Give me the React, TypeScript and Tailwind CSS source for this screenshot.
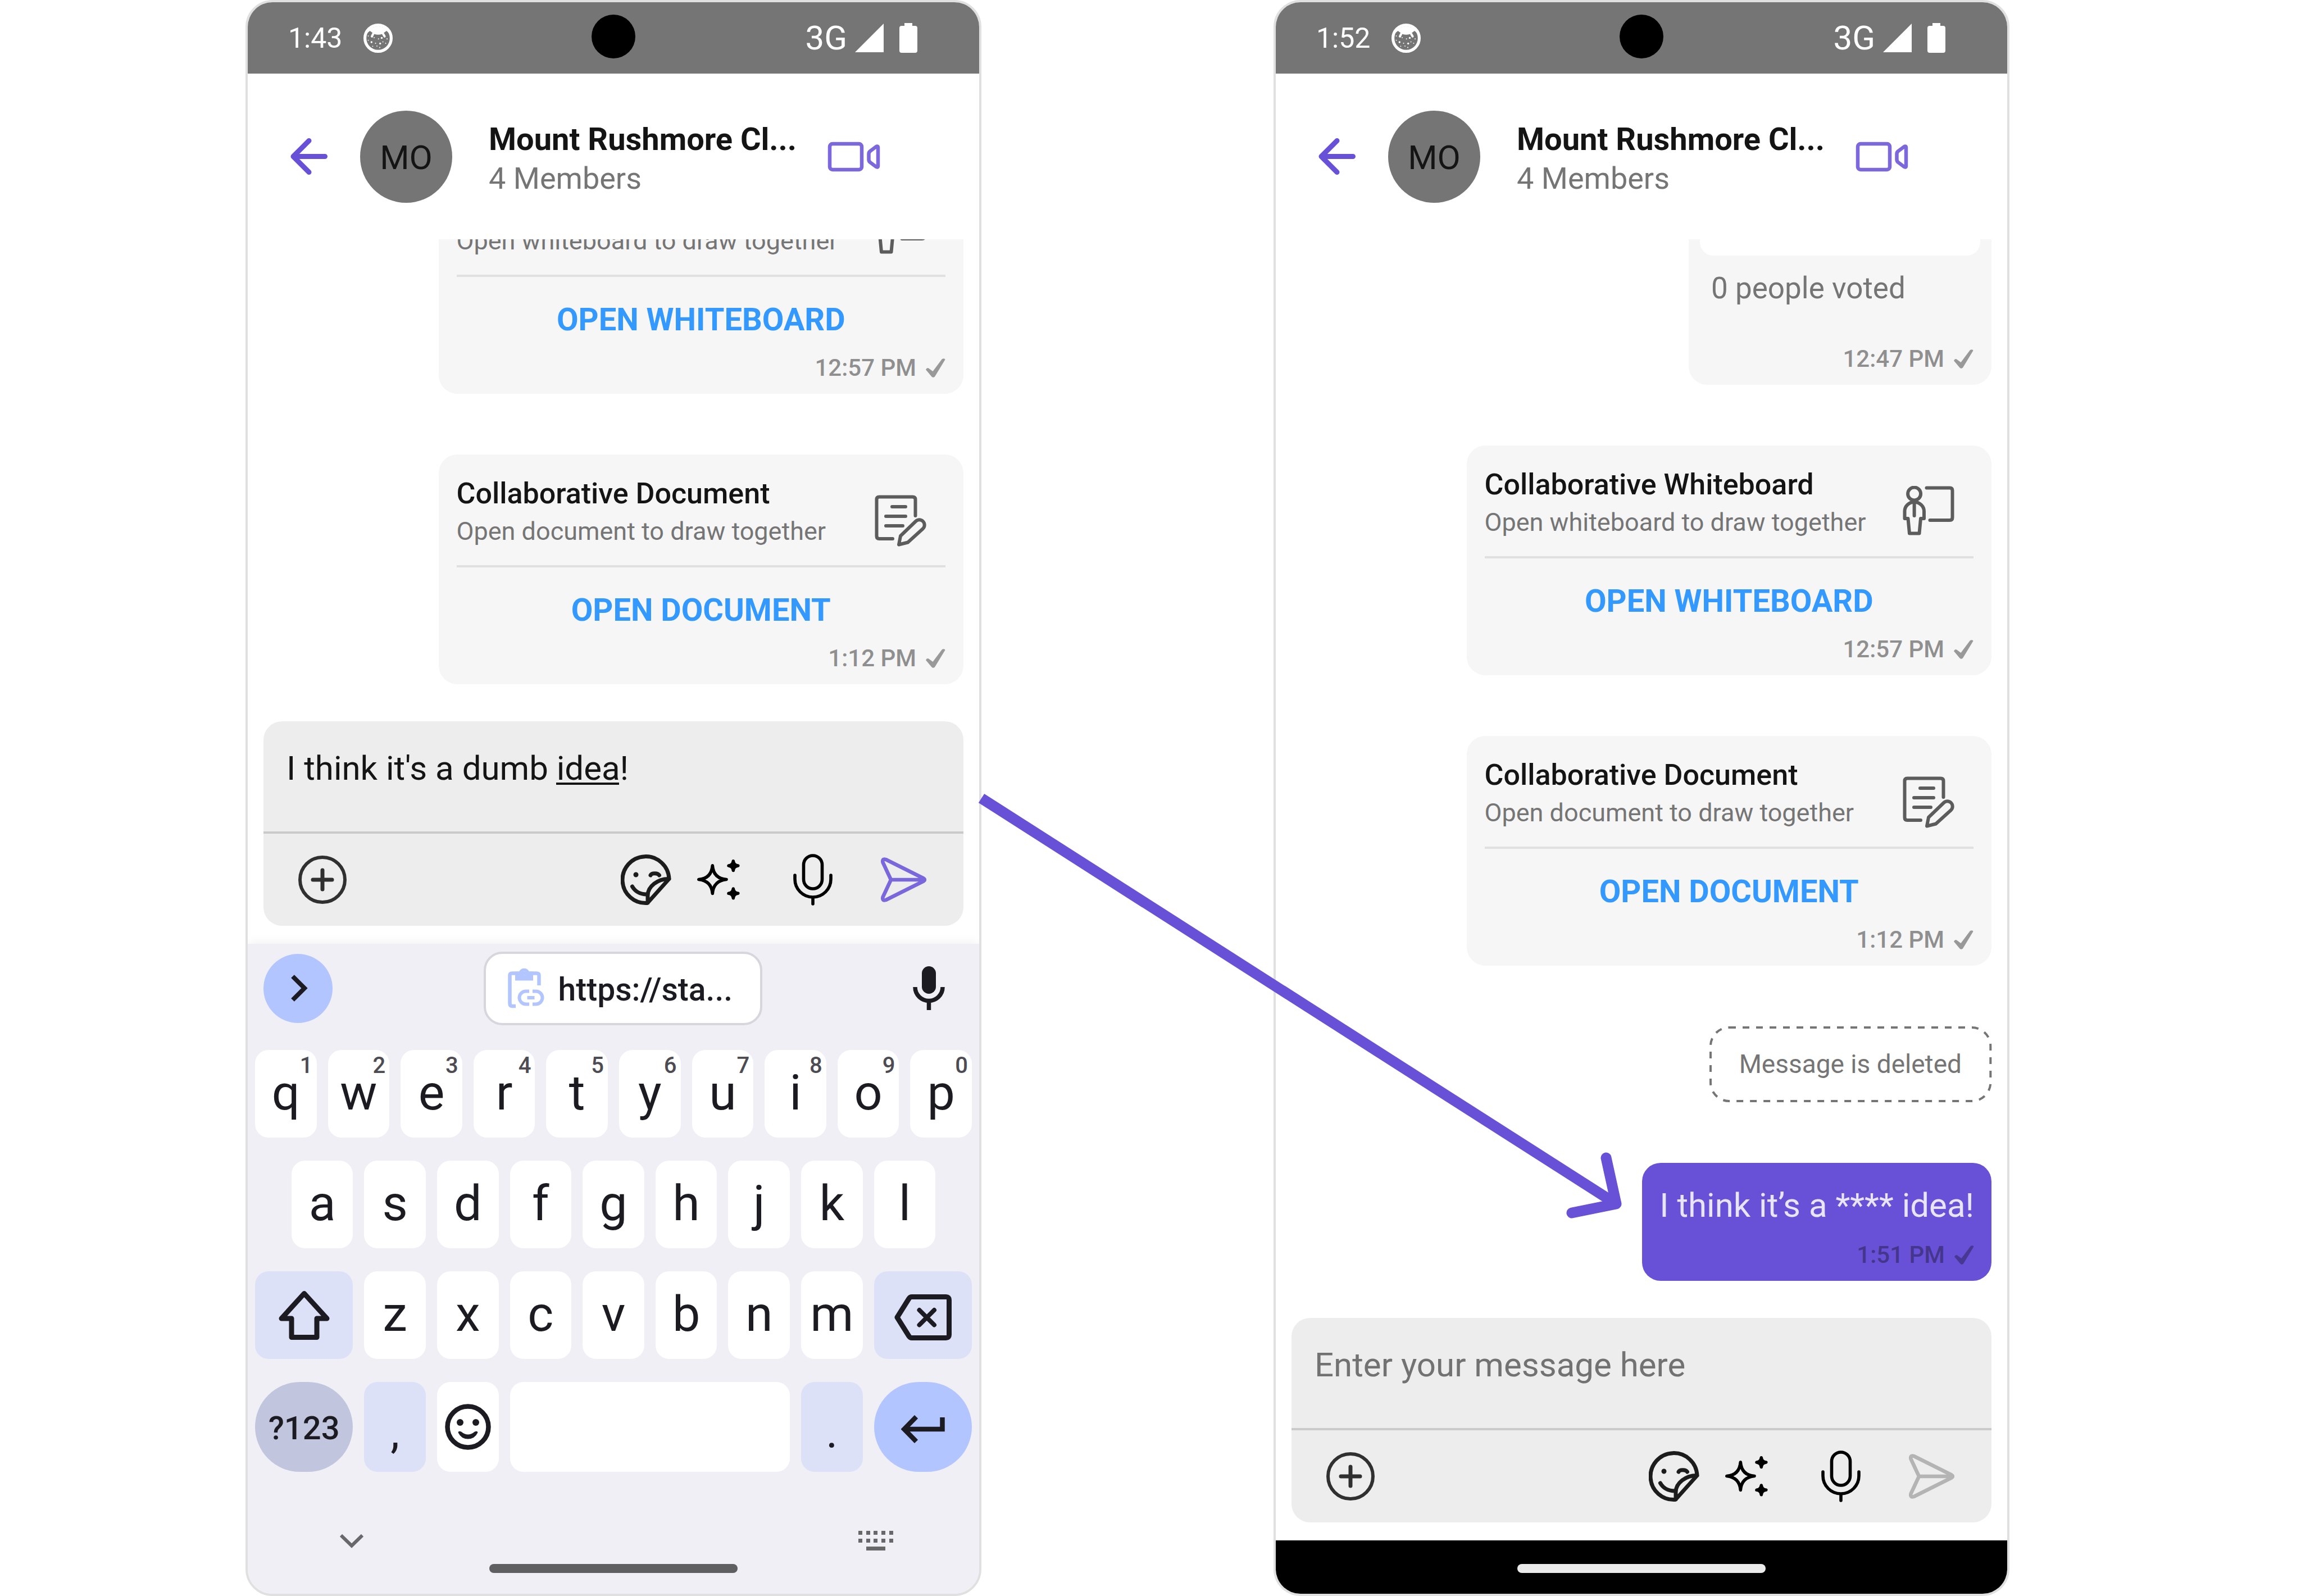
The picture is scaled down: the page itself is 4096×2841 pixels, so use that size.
import type { ReactNode } from 'react';

type IconProps = { className?: string };

function NotificationBadge() {
  const dots: [number, number, number][] = [
    [8.5, 22, 0.9], [19, 25, 0.9], [26.7, 27.3, 1], [32.5, 25.5, 1.7], [42, 27.3, 1],
    [8.5, 29.7, 0.9], [14.3, 33, 1.7], [21.5, 35, 1], [29.7, 35.5, 1.7], [34.6, 32.5, 0.9],
    [39.5, 35, 0.9], [16.4, 40.4, 0.9], [24, 40, 0.9], [29, 42.5, 1],
  ];
  return (
    <svg viewBox="0 0 52 52" className="size-[52px]" fill="#fff" aria-hidden="true">
      <circle cx="26" cy="26" r="23.4" fill="none" stroke="#fff" strokeWidth="5.2" />
      <path d="M5 18 L11.5 13 L19 18.5 Q26 21 33.4 18.5 L41 13 L47 18 A23.4 23.4 0 0 0 5 18Z" />
      <path d="M17.3 18.2 L15 22.8 M35 18.2 L37.6 22.8" stroke="#fff" strokeWidth="4" strokeLinecap="round" />
      {dots.map(([x, y, r]) => (
        <circle key={`${x}-${y}`} cx={x} cy={y} r={r} />
      ))}
    </svg>
  );
}

function SignalIcon() {
  return (
    <svg viewBox="0 0 51 51" className="size-[51px]" fill="#fff" aria-hidden="true">
      <path d="M51 0 V51 H0Z" />
    </svg>
  );
}

function BatteryIcon() {
  return (
    <svg viewBox="0 0 32 53" className="h-[53px] w-8" fill="#fff" aria-hidden="true">
      <path d="M9 0 H23 V5 H28 Q32 5 32 9 V49 Q32 53 28 53 H4 Q0 53 0 49 V9 Q0 5 4 5 H9Z" />
    </svg>
  );
}

function BackIcon() {
  return (
    <svg viewBox="0 0 66 65" className="h-[65px] w-[66px]" fill="none" stroke="#6851d6" strokeWidth="9" strokeLinecap="round" strokeLinejoin="round" aria-hidden="true">
      <path d="M61.5 32.5 H5 M33 4.5 L5 32.5 L33 60.5" />
    </svg>
  );
}

function VideoIcon() {
  return (
    <svg viewBox="0 0 94 54" className="h-[54px] w-[94px]" fill="none" stroke="#7c68dc" strokeWidth="6.5" strokeLinejoin="round" aria-hidden="true">
      <rect x="4" y="4" width="57" height="46" rx="5" />
      <path d="M73.500 22 Q73.500 19 76 17 L86 9.500 Q90 7 90 11 V43 Q90 47 86 44.500 L76 37 Q73.500 35 73.500 32Z" />
    </svg>
  );
}

function CheckIcon({ className = '' }: IconProps) {
  return (
    <svg viewBox="0 0 36 36" className={`size-9 opacity-90 ${className}`} fill="currentColor" aria-hidden="true">
      <path d="M1 21 Q3 17 6 18.500 L13.500 24 L30 2 Q34.500 0 35.500 3 L17 33.500 Q14 36 11.500 33.500Z" />
    </svg>
  );
}

function WhiteboardIcon() {
  return (
    <svg viewBox="0 0 92 92" className="size-[92px]" fill="none" stroke="#5c5c5c" strokeWidth="6" strokeLinecap="round" strokeLinejoin="round" aria-hidden="true">
      <circle cx="20.600" cy="14" r="11.500" />
      <path d="M20.600 28.500 V53" />
      <path d="M20.600 28.500 C10 29 3.500 37 3.500 45 V58 H9.500 L12 84.500 H29.500 L32 58 H38 V45 C38 37 31 29 20.600 28.500Z" />
      <path d="M42.500 3.500 H84 Q88.500 3.500 88.500 8.500 V56 Q88.500 61 84 61 H48.500" />
    </svg>
  );
}

function DocumentIcon() {
  return (
    <svg viewBox="0 0 92 92" className="size-[92px]" fill="none" stroke="#5c5c5c" strokeWidth="6" strokeLinecap="round" strokeLinejoin="round" aria-hidden="true">
      <path d="M72.500 37 V8 Q72.500 3.500 67.500 3.500 H8 Q3.500 3.500 3.500 8 V73 Q3.500 78 8 78 H32" />
      <path d="M31 21 H55 M20 38 H55 M20 55 H50" />
      <path d="M43 88.500 L46 73 L73 47 A8.500 8.500 0 0 1 86 60 L59 84.500Z" />
    </svg>
  );
}

function PlusCircleIcon() {
  return (
    <svg viewBox="0 0 86 86" className="size-[86px]" fill="none" stroke="#303030" strokeWidth="6" strokeLinecap="round" aria-hidden="true">
      <circle cx="43" cy="43" r="40" />
      <path d="M43 26 V60 M26 43 H60" strokeWidth="7" />
    </svg>
  );
}

function StickerIcon() {
  return (
    <svg viewBox="0 0 90 91" className="h-[91px] w-[90px]" fill="none" stroke="#1c1c1c" strokeWidth="7" strokeLinejoin="round" strokeLinecap="round" aria-hidden="true">
      <path d="M86 43.500 A41.500 41.500 0 1 0 47.500 86.500 L86 43.500 C66 43 48 57 48 73 V86" />
      <path d="M20.500 57 C25 65 34 71 46 71" />
      <path d="M53 37 C55 32.500 66 32.500 68.500 37" />
      <circle cx="27" cy="36" r="3" fill="#1c1c1c" strokeWidth="3" />
    </svg>
  );
}

function SparklesIcon() {
  return (
    <svg viewBox="0 0 76 72" className="h-[72px] w-[76px]" fill="none" stroke="#000" strokeWidth="5.600" strokeLinecap="round" strokeLinejoin="round" aria-hidden="true">
      <path d="M27.300 10.800 C28.500 26 37 34.500 52 35.500 C37 37 28.500 45 27.300 60.500 C26 45 17.500 37 2.800 35.500 C17.500 34.500 26 26 27.300 10.800Z" />
      <path fill="#000" d="M64.300 2.800 Q65 10.300 72.800 11 Q65 12 64.300 19.400 Q63.500 12 56 11 Q63.500 10.300 64.300 2.800Z" />
      <path fill="#000" d="M64.300 52 Q65 59.500 72.800 60.300 Q65 61 64.300 68.800 Q63.500 61 56 60.300 Q63.500 59.500 64.300 52Z" />
    </svg>
  );
}

function MicOutlineIcon() {
  return (
    <svg viewBox="0 0 70 92" className="h-[92px] w-[70px]" fill="none" stroke="#000" strokeWidth="5.600" strokeLinecap="round" aria-hidden="true">
      <rect x="18.500" y="3" width="33" height="59" rx="16.500" />
      <path d="M3 38 V45 A32 32 0 0 0 67 45 V38 M35 77 V89" />
    </svg>
  );
}

function SendIcon({ className = '' }: IconProps) {
  return (
    <svg viewBox="0 0 81 80" className={`h-20 w-[81px] ${className}`} fill="none" stroke="currentColor" strokeWidth="6.5" strokeLinecap="round" strokeLinejoin="round" aria-hidden="true">
      <path d="M9 4 L76 37.500 Q80 40 76 42.500 L9 76 Q2 78 3.500 71 L18 40 L3.500 9 Q2 2 9 4Z M18 40 H76" />
    </svg>
  );
}

function PasteLinkIcon() {
  return (
    <svg viewBox="0 0 66 72" className="h-[72px] w-[66px]" fill="none" stroke="#b3c5ff" strokeWidth="6.500" aria-hidden="true">
      <path d="M14 68 H8 Q3.500 68 3.500 63 V13 Q3.500 9.500 8 9.500 H51 Q55.500 9.500 55.500 13 V31" />
      <path fillRule="evenodd" d="M13 6.500 H20 A10 10 0 0 1 38 6.500 H45 V22.500 H13Z M29.500 6 a3.500 3.500 0 1 0 0.010 0Z" fill="#b3c5ff" stroke="none" />
      <path d="M38 41.500 H32 A11.500 11.500 0 0 0 32 64.500 H38 M44 41.500 H50 A11.500 11.500 0 0 1 50 64.500 H44 M34.500 53 H47.500" strokeWidth="6" />
    </svg>
  );
}

function MicFilledIcon() {
  return (
    <svg viewBox="0 0 57 78" className="h-[78px] w-[57px]" fill="none" stroke="#1b1b21" strokeWidth="7.500" aria-hidden="true">
      <rect x="16" y="0" width="25" height="49" rx="12.500" fill="#1b1b21" stroke="none" />
      <path d="M4 37 A24.500 24.500 0 0 0 53 37 M28.500 61 V78" />
    </svg>
  );
}

function ChevronRightIcon() {
  return (
    <svg viewBox="0 0 30 48" className="h-12 w-[30px]" fill="none" stroke="#1b1b21" strokeWidth="8" aria-hidden="true">
      <path d="M3 3 L24 24 L3 45" />
    </svg>
  );
}

function ShiftIcon() {
  return (
    <svg viewBox="0 0 91 88" className="h-[88px] w-[91px]" fill="none" stroke="#1b1b21" strokeWidth="9" strokeLinejoin="round" aria-hidden="true">
      <path d="M45.500 5.500 L86 50 H68 V83.500 H23 V50 H5Z" />
    </svg>
  );
}

function BackspaceIcon() {
  return (
    <svg viewBox="0 0 102 82" className="h-[82px] w-[102px]" fill="none" stroke="#1b1b21" strokeWidth="9" strokeLinejoin="round" strokeLinecap="round" aria-hidden="true">
      <path d="M5 41 L26 7.500 Q28 4.500 31 4.500 H92 Q97.500 4.500 97.500 10 V72 Q97.500 77.500 92 77.500 H31 Q28 77.500 26 74.500Z" />
      <path d="M44.500 28 L71 54.500 M71 28 L44.500 54.500" strokeWidth="8" />
    </svg>
  );
}

function EnterIcon() {
  return (
    <svg viewBox="0 0 78 50" className="h-[50px] w-[78px]" fill="none" stroke="#1b1b21" strokeWidth="8.500" aria-hidden="true">
      <path d="M73.500 4 V25 H6 M27 3 L5.500 25 L27 47" />
    </svg>
  );
}

function SmileIcon() {
  return (
    <svg viewBox="0 0 82 82" className="size-[82px]" fill="#1b1b21" aria-hidden="true">
      <circle cx="41" cy="41" r="36.500" fill="none" stroke="#1b1b21" strokeWidth="8.500" />
      <circle cx="27" cy="33" r="6" />
      <circle cx="55" cy="33" r="6" />
      <path d="M23.500 51 Q24 47.500 29 49.500 Q41 59.500 53 49.500 Q58 47.500 58.500 51 Q53 62.500 41 62.500 Q29 62.500 23.500 51Z" />
    </svg>
  );
}

function ChevronDownIcon() {
  return (
    <svg viewBox="0 0 42 25" className="h-[25px] w-[42px]" fill="none" stroke="#68686a" strokeWidth="6" aria-hidden="true">
      <path d="M2 2 L21 20.500 L40 2" />
    </svg>
  );
}

function KeyboardIcon() {
  return (
    <svg viewBox="0 0 62 36" className="h-9 w-[62px]" fill="#68686a" aria-hidden="true">
      {[0, 14].map((y) =>
        [0, 14, 27, 41, 55].map((x) => <rect key={`${x}-${y}`} x={x} y={y} width="7" height="7" />),
      )}
      <rect x="14" y="28" width="34" height="7" />
    </svg>
  );
}

function StatusBar({ time }: { time: string }) {
  return (
    <header className="relative flex h-[127px] shrink-0 items-center bg-[#757575] pr-[110px] pl-[72px] text-white">
      <span className="text-[50px] leading-none">{time}</span>
      <span className="ml-[38px]">
        <NotificationBadge />
      </span>
      <span className="absolute top-[22px] left-1/2 size-[78px] -translate-x-1/2 rounded-full bg-black" />
      <span className="ml-auto text-[60px] leading-none">3G</span>
      <span className="ml-[14px]">
        <SignalIcon />
      </span>
      <span className="ml-7">
        <BatteryIcon />
      </span>
    </header>
  );
}

function ChatHeader() {
  return (
    <div className="flex h-[295px] shrink-0 items-center pr-[176px] pl-[76px]">
      <button type="button" aria-label="Back">
        <BackIcon />
      </button>
      <span className="ml-[58px] flex size-[164px] shrink-0 items-center justify-center rounded-full bg-[#757575] pt-1 text-[60px] leading-none text-[#141414]">
        MO
      </span>
      <div className="ml-[65px] min-w-0 flex-1 pt-2 whitespace-nowrap">
        <h1 className="text-[56px] leading-[70px] font-bold text-[#141414]">Mount Rushmore Cl...</h1>
        <p className="text-[54px] leading-[70px] text-[#757575]">4 Members</p>
      </div>
      <button type="button" aria-label="Start video call">
        <VideoIcon />
      </button>
    </div>
  );
}

function Timestamp({ time, className }: { time: string; className: string }) {
  return (
    <div className={`flex items-center justify-end gap-4 text-[42px] leading-[48px] ${className}`}>
      <time className="font-medium">{time}</time>
      <CheckIcon />
    </div>
  );
}

function ToolCard({ title, detail, action, time, icon }: { title: string; detail: string; action: string; time: string; icon: ReactNode }) {
  return (
    <article className="w-3/4 shrink-0 self-end rounded-[33px] bg-[#f6f6f6] px-8 pb-[22px]">
      <div className="flex border-b-4 border-[#e0e0e0] pt-[38px] pb-[25px] whitespace-nowrap">
        <div className="flex-1">
          <h2 className="text-[52px] leading-[64px] font-medium text-[#141414]">{title}</h2>
          <p className="text-[45px] leading-[70px] text-[#757575]">{detail}</p>
        </div>
        <span className="mr-[34px] mb-2 self-end">{icon}</span>
      </div>
      <button type="button" className="mt-4 h-[120px] w-full text-[56px] leading-none font-bold text-[#3399ff]">
        {action}
      </button>
      <Timestamp time={time} className="mt-0.5 text-[#8f8f8f]" />
    </article>
  );
}

function WhiteboardCard() {
  return (
    <ToolCard title="Collaborative Whiteboard" detail="Open whiteboard to draw together" action="OPEN WHITEBOARD" time="12:57 PM" icon={<WhiteboardIcon />} />
  );
}

function DocumentCard() {
  return (
    <ToolCard title="Collaborative Document" detail="Open document to draw together" action="OPEN DOCUMENT" time="1:12 PM" icon={<DocumentIcon />} />
  );
}

function PollCard() {
  return (
    <article className="w-[539px] shrink-0 self-end rounded-[33px] bg-[#f6f6f6] px-5 pt-5 pb-[22px]">
      <div className="h-[160px] rounded-3xl bg-white" />
      <p className="mt-[26px] px-5 text-[53px] leading-[64px] text-[#757575]">0 people voted</p>
      <Timestamp time="12:47 PM" className="mt-[70px] pr-3 text-[#8f8f8f]" />
    </article>
  );
}

function DeletedMessage() {
  return (
    <p className="relative shrink-0 self-end px-[53px] text-[46px] leading-[135px] text-[#757575]">
      <svg className="absolute inset-0 size-full overflow-visible" fill="none" stroke="#757575" strokeWidth="4" strokeDasharray="12 12" aria-hidden="true">
        <rect x="2" y="2" rx="33" className="h-[calc(100%-4px)] w-[calc(100%-4px)]" />
      </svg>
      Message is deleted
    </p>
  );
}

function SentMessage() {
  return (
    <article className="shrink-0 self-end rounded-[33px] bg-[#6851d6] px-[31px] pt-10 pb-[22px]">
      <p className="text-[60px] leading-[72px] text-[#e8e5f9]">I think it’s a **** idea!</p>
      <Timestamp time="1:51 PM" className="mt-7 text-[#44368c]" />
    </article>
  );
}

function MessageList({ children }: { children: ReactNode }) {
  return (
    <section className="flex min-h-0 flex-1 basis-0 flex-col justify-end gap-[108px] overflow-hidden px-7 pb-[66px]">
      {children}
    </section>
  );
}

function Composer({ id, draft, composing }: { id: string; draft?: string; composing?: boolean }) {
  return (
    <form className="mx-7 mb-8 shrink-0 overflow-hidden rounded-[33px] bg-[#ededed]">
      <div className="relative h-[196px]">
        <label htmlFor={id} className="sr-only">
          Message
        </label>
        <textarea
          id={id}
          defaultValue={draft}
          placeholder="Enter your message here"
          spellCheck={false}
          className="block size-full resize-none overflow-hidden bg-transparent px-[41px] pt-12 text-[60px] leading-[72px] text-[#141414] outline-none placeholder:text-[#727272]"
        />
        {composing && <span className="absolute top-[109px] left-[521px] h-1 w-28 bg-[#141414]" />}
      </div>
      <div className="flex h-[168px] items-center border-t-4 border-[#cacaca] pr-[66px] pl-[62px]">
        <button type="button" aria-label="Add attachment">
          <PlusCircleIcon />
        </button>
        <button type="button" aria-label="Stickers" className="ml-auto">
          <StickerIcon />
        </button>
        <button type="button" aria-label="Smart replies" className="ml-[46px]">
          <SparklesIcon />
        </button>
        <button type="button" aria-label="Record voice" className="ml-[95px]">
          <MicOutlineIcon />
        </button>
        <button type="button" aria-label="Send" className="ml-[86px]">
          <SendIcon className={composing ? 'text-[#7b67dc]' : 'text-[#b4b4b4]'} />
        </button>
      </div>
    </form>
  );
}

function Key({ label, hint, className = '' }: { label: string; hint?: string; className?: string }) {
  return (
    <button type="button" className={`relative col-span-2 h-[156px] rounded-3xl bg-white pb-1 text-[88px] leading-[100px] ${className}`}>
      {label}
      {hint && <span className="absolute top-2 right-[7px] text-[40px] leading-10 font-medium text-[#4c4c52]">{hint}</span>}
    </button>
  );
}

const topRow: [string, string][] = [
  ['q', '1'], ['w', '2'], ['e', '3'], ['r', '4'], ['t', '5'],
  ['y', '6'], ['u', '7'], ['i', '8'], ['o', '9'], ['p', '0'],
];
const homeRow = ['a', 's', 'd', 'f', 'g', 'h', 'j', 'k', 'l'];
const bottomRow = ['z', 'x', 'c', 'v', 'b', 'n', 'm'];

function Keyboard() {
  return (
    <section aria-label="Keyboard" className="shrink-0 bg-[#f0eff6] text-[#1b1b21] shadow-[0_-2px_18px_rgba(0,0,0,0.06)]">
      <div className="flex h-[158px] items-center justify-between pr-[61px] pl-7">
        <button type="button" aria-label="More suggestions" className="flex size-[123px] items-center justify-center rounded-full bg-[#b3c5ff] pl-1">
          <ChevronRightIcon />
        </button>
        <button type="button" className="flex h-[131px] w-[496px] items-center gap-6 rounded-[33px] border-4 border-[#d6d6dc] bg-white pl-[39px] text-[57px] leading-none font-medium">
          <PasteLinkIcon />
          <span className="pt-1">https://sta...</span>
        </button>
        <button type="button" aria-label="Voice typing">
          <MicFilledIcon />
        </button>
      </div>
      <div className="mt-[31px] grid grid-cols-20 gap-x-5 gap-y-[41px] px-[13px]">
        {topRow.map(([label, hint]) => (
          <Key key={label} label={label} hint={hint} />
        ))}
        {homeRow.map((label, index) => (
          <Key key={label} label={label} className={index === 0 ? 'col-start-2' : ''} />
        ))}
        <button type="button" aria-label="Shift" className="col-span-3 col-start-1 flex items-center justify-center rounded-3xl bg-[#dde1f7]">
          <ShiftIcon />
        </button>
        {bottomRow.map((label) => (
          <Key key={label} label={label} />
        ))}
        <button type="button" aria-label="Backspace" className="col-span-3 flex items-center justify-center rounded-3xl bg-[#dde1f7] pt-2">
          <BackspaceIcon />
        </button>
        <button type="button" className="col-span-3 h-40 rounded-full bg-[#c1c6de] pt-1 text-[58px] leading-none font-medium">
          ?123
        </button>
        <button type="button" className="col-span-2 rounded-3xl bg-[#dde1f7] pt-5 text-[80px] leading-[100px]">
          ,
        </button>
        <button type="button" aria-label="Emoji" className="col-span-2 flex items-center justify-center rounded-3xl bg-white">
          <SmileIcon />
        </button>
        <button type="button" aria-label="Space" className="col-span-8 rounded-3xl bg-white" />
        <button type="button" className="col-span-2 rounded-3xl bg-[#dde1f7] pt-5 text-[80px] leading-[100px]">
          .
        </button>
        <button type="button" aria-label="Enter" className="col-span-3 flex items-center justify-center rounded-full bg-[#b3c5ff] pt-2">
          <EnterIcon />
        </button>
      </div>
      <div className="mt-[105px] flex h-9 items-center justify-between pr-[153px] pl-[164px]">
        <button type="button" aria-label="Hide keyboard">
          <ChevronDownIcon />
        </button>
        <button type="button" aria-label="Switch keyboard">
          <KeyboardIcon />
        </button>
      </div>
      <div className="mx-auto mt-[23px] mb-[37px] h-4 w-[34%] rounded-full bg-[#5f5f61]" />
    </section>
  );
}

function Phone({ time, children }: { time: string; children: ReactNode }) {
  return (
    <section className="flex min-h-screen flex-col overflow-hidden rounded-[48px] border-4 border-[#e0e0e0] bg-white">
      <StatusBar time={time} />
      <ChatHeader />
      {children}
    </section>
  );
}

export default function App() {
  return (
    <main className="relative grid grid-cols-[437fr_1310fr_520fr_1310fr_519fr] bg-white font-[Roboto,sans-serif]">
      <div className="col-start-2">
        <Phone time="1:43">
          <MessageList>
            <WhiteboardCard />
            <DocumentCard />
          </MessageList>
          <Composer id="draft-message" draft="I think it's a dumb idea!" composing />
          <Keyboard />
        </Phone>
      </div>
      <div className="col-start-4">
        <Phone time="1:52">
          <MessageList>
            <PollCard />
            <WhiteboardCard />
            <DocumentCard />
            <DeletedMessage />
            <SentMessage />
          </MessageList>
          <Composer id="new-message" />
          <div className="h-[95px] shrink-0 bg-black pt-[42px]">
            <div className="mx-auto h-4 w-[34%] rounded-full bg-[#ebebeb]" />
          </div>
        </Phone>
      </div>
      <svg viewBox="0 0 4096 2841" className="pointer-events-none absolute inset-0 size-full" fill="none" stroke="#6851d6" strokeWidth="19" strokeLinejoin="round" aria-hidden="true">
        <path d="M1747 1421 L2877 2143" />
        <path d="M2859 2061 L2877 2143 L2798 2159" strokeLinecap="round" />
      </svg>
    </main>
  );
}
